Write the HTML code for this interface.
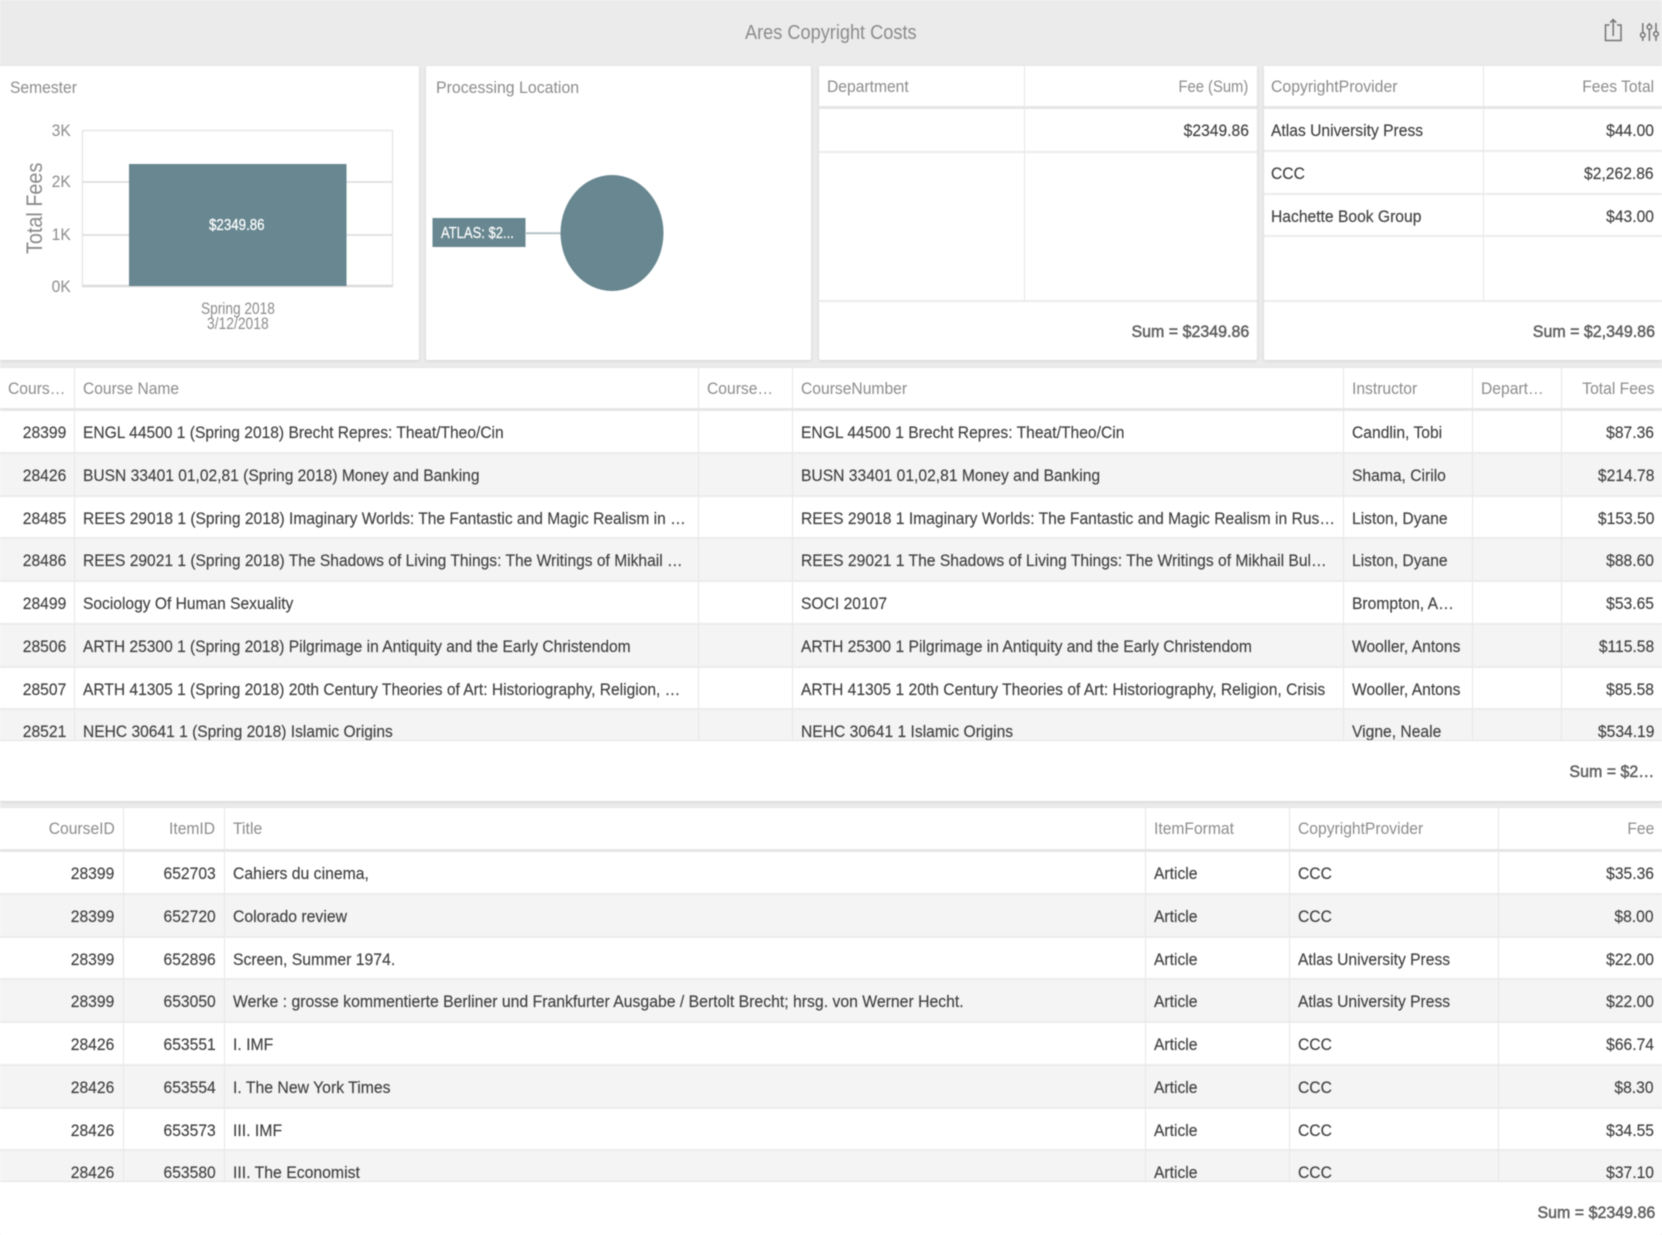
<!DOCTYPE html>
<html><head><meta charset="utf-8"><title>Ares Copyright Costs</title>
<style>
*{box-sizing:border-box}
html,body{margin:0;padding:0;width:1662px;height:1235px;overflow:hidden;background:#fff}
body{font-family:"Liberation Sans",sans-serif;font-size:17px;color:#404040;position:relative}
#w{position:absolute;left:0;top:0;width:1662px;height:1235px;background:#ebebeb;filter:blur(.5px);overflow:hidden}
.p{position:absolute;background:#fff;box-shadow:0 1px 3px rgba(0,0,0,.1);border-radius:2px}
.a{position:absolute;white-space:nowrap;line-height:20px;transform:scaleX(.92);transform-origin:left center}
.ar{position:absolute;white-space:nowrap;line-height:20px;transform:scaleX(.92);transform-origin:right center;text-align:right}
.h{color:#8c8c8c}
.s{color:#5f5f5f;-webkit-text-stroke:.5px #5f5f5f;transform:scaleX(.94)}
.t{position:absolute;overflow:hidden;display:block}
.row{display:grid;grid-template-columns:var(--c);height:42.75px;border-bottom:2px solid #ebebeb;-webkit-text-stroke:.15px #404040}
.row:nth-child(odd){background:#f4f4f4}
.row.hd{height:43px;background:#fff;border-bottom:3px solid #e6e6e6;color:#8c8c8c;-webkit-text-stroke:0}
.row>div{border-right:1px solid #e6e6e6;padding:0 8px;line-height:43px;overflow:hidden;white-space:nowrap}
.row.hd>div{line-height:42px}
.row>div:last-child{border-right:0}
.row span{display:inline-block;transform:scaleX(.92);transform-origin:left center}
.row>.r{text-align:right}
.row>.r span{transform-origin:right center}
.row.pl,.row.pl:nth-child(odd){background:#fff}
.c .row>div:nth-child(2) span{transform:scaleX(.916)}
.i .row>div:nth-child(3) span{transform:scaleX(.928)}
</style></head><body><div id="w">

<div class="a" style="left:745px;top:22.500px;font-size:20px;color:#8c8c8c;transform:scaleX(.908)">Ares Copyright Costs</div>
<svg style="position:absolute;left:1600px;top:16px" width="62" height="28" viewBox="1600 16 62 28" fill="none" stroke="#757575" stroke-width="1.5">
<path d="M1609.5 25H1605.5V40.5H1621V25H1617M1613.2 36V20M1610.2 22.6L1613.2 19.6L1616.2 22.6"/>
<path d="M1642.8 23V32.5M1642.8 37.5V41M1649.4 23V24.5M1649.4 29.5V41M1656 23V31.5M1656 36.5V41"/>
<circle cx="1642.8" cy="35" r="2.3"/><circle cx="1649.4" cy="27" r="2.3"/><circle cx="1656" cy="34" r="2.3"/>
</svg>

<!-- Semester -->
<div class="p" style="left:0;top:66px;width:419px;height:294px"></div>
<div class="a h" style="left:10px;top:78px">Semester</div>
<svg style="position:absolute;left:0;top:66px" width="419" height="294" viewBox="0 66 419 294">
<path d="M82 130.500H392.500V286M82.500 130V286" fill="none" stroke="#e3e3e3" stroke-width="1.200"/>
<path d="M82 182H393M82 235H393" stroke="#e3e3e3" stroke-width="2"/>
<path d="M82 286H393" stroke="#dcdcdc" stroke-width="2.500"/>
<rect x="129" y="164" width="217.500" height="122" fill="#688790"/>
</svg>
<div class="ar h" style="right:1591px;top:121px">3K</div>
<div class="ar h" style="right:1591px;top:172px">2K</div>
<div class="ar h" style="right:1591px;top:225px">1K</div>
<div class="ar h" style="right:1591px;top:277px">0K</div>
<div style="position:absolute;left:-15px;top:199px;width:100px;height:20px;line-height:20px;text-align:center;font-size:22px;color:#8a8a8a;white-space:nowrap;transform:rotate(-90deg) scaleX(.9)">Total Fees</div>
<div class="a" style="left:208.500px;top:216px;color:#fff;font-size:15.500px;-webkit-text-stroke:.25px #fff;transform:scaleX(.86)">$2349.86</div>
<div class="a h" style="left:201px;top:302px;font-size:16.500px;line-height:15px;transform:scaleX(.83)">Spring 2018</div>
<div class="a h" style="left:207px;top:317px;font-size:16.500px;line-height:15px;transform:scaleX(.84)">3/12/2018</div>

<!-- Processing Location -->
<div class="p" style="left:426px;top:66px;width:385px;height:294px"></div>
<div class="a h" style="left:436px;top:78px;transform:scaleX(.935)">Processing Location</div>
<svg style="position:absolute;left:426px;top:66px" width="385" height="294" viewBox="426 66 385 294">
<rect x="432.500" y="218" width="93" height="29" fill="#688790"/>
<path d="M525 233.300H561" stroke="#b5c4c8" stroke-width="2"/>
<ellipse cx="612" cy="233" rx="51.500" ry="58" fill="#688790"/>
</svg>
<div class="a" style="left:441px;top:224px;color:#fff;font-size:15.500px;transform:scaleX(.84);-webkit-text-stroke:.2px #fff">ATLAS: $2...</div>

<!-- Department -->
<div class="p" style="left:819px;top:66px;width:437.500px;height:294px"></div>
<div class="t" style="left:819px;top:66px;width:437.500px;height:235px;--c:206px 1fr">
<div class="row hd"><div><span>Department</span></div><div class="r"><span style="transform:scaleX(.87)">Fee (Sum)</span></div></div>
<div class="row pl" style="height:44px"><div></div><div class="r"><span>$2349.86</span></div></div>
<div class="row pl" style="height:148px;border-bottom:0"><div></div><div></div></div>
</div>
<div style="position:absolute;left:819px;top:300px;width:437.500px;height:2px;background:#ebebeb"></div>
<div class="ar s" style="right:413px;top:322px">Sum = $2349.86</div>

<!-- CopyrightProvider -->
<div class="p" style="left:1264px;top:66px;width:398px;height:294px"></div>
<div class="t" style="left:1264px;top:66px;width:398px;height:235px;--c:220px 1fr">
<div class="row hd"><div style="padding-left:7px"><span style="transform:scaleX(.93)">CopyrightProvider</span></div><div class="r"><span>Fees Total</span></div></div>
<div class="row pl" style="height:43px"><div style="padding-left:7px"><span>Atlas University Press</span></div><div class="r"><span>$44.00</span></div></div>
<div class="row pl" style="height:42.500px"><div style="padding-left:7px"><span>CCC</span></div><div class="r"><span>$2,262.86</span></div></div>
<div class="row pl" style="height:42.500px"><div style="padding-left:7px"><span>Hachette Book Group</span></div><div class="r"><span>$43.00</span></div></div>
<div class="row pl" style="height:63.500px;border-bottom:0"><div></div><div></div></div>
</div>
<div style="position:absolute;left:1264px;top:300px;width:398px;height:2px;background:#ebebeb"></div>
<div class="ar s" style="right:7px;top:322px">Sum = $2,349.86</div>

<!-- Course table -->
<div class="p" style="left:0;top:368px;width:1662px;height:433px"></div>
<div class="t c" style="left:0;top:368px;width:1662px;height:373px;border-bottom:1px solid #e3e3e3;--c:75px 623.500px 94px 551px 129px 89px 1fr">
<div class="row hd"><div><span>Cours…</span></div><div><span>Course Name</span></div><div><span>Course…</span></div><div><span>CourseNumber</span></div><div><span>Instructor</span></div><div><span>Depart…</span></div><div class="r"><span>Total Fees</span></div></div>
<div class="row"><div class="r"><span>28399</span></div><div><span>ENGL 44500 1 (Spring 2018) Brecht Repres: Theat/Theo/Cin</span></div><div></div><div><span>ENGL 44500 1 Brecht Repres: Theat/Theo/Cin</span></div><div><span>Candlin, Tobi</span></div><div></div><div class="r"><span>$87.36</span></div></div>
<div class="row"><div class="r"><span>28426</span></div><div><span>BUSN 33401 01,02,81 (Spring 2018) Money and Banking</span></div><div></div><div><span>BUSN 33401 01,02,81 Money and Banking</span></div><div><span>Shama, Cirilo</span></div><div></div><div class="r"><span>$214.78</span></div></div>
<div class="row"><div class="r"><span>28485</span></div><div><span>REES 29018 1 (Spring 2018) Imaginary Worlds: The Fantastic and Magic Realism in …</span></div><div></div><div><span>REES 29018 1 Imaginary Worlds: The Fantastic and Magic Realism in Rus…</span></div><div><span>Liston, Dyane</span></div><div></div><div class="r"><span>$153.50</span></div></div>
<div class="row"><div class="r"><span>28486</span></div><div><span>REES 29021 1 (Spring 2018) The Shadows of Living Things: The Writings of Mikhail …</span></div><div></div><div><span>REES 29021 1 The Shadows of Living Things: The Writings of Mikhail Bul…</span></div><div><span>Liston, Dyane</span></div><div></div><div class="r"><span>$88.60</span></div></div>
<div class="row"><div class="r"><span>28499</span></div><div><span>Sociology Of Human Sexuality</span></div><div></div><div><span>SOCI 20107</span></div><div><span>Brompton, A…</span></div><div></div><div class="r"><span>$53.65</span></div></div>
<div class="row"><div class="r"><span>28506</span></div><div><span>ARTH 25300 1 (Spring 2018) Pilgrimage in Antiquity and the Early Christendom</span></div><div></div><div><span>ARTH 25300 1 Pilgrimage in Antiquity and the Early Christendom</span></div><div><span>Wooller, Antons</span></div><div></div><div class="r"><span>$115.58</span></div></div>
<div class="row"><div class="r"><span>28507</span></div><div><span>ARTH 41305 1 (Spring 2018) 20th Century Theories of Art: Historiography, Religion, …</span></div><div></div><div><span>ARTH 41305 1 20th Century Theories of Art: Historiography, Religion, Crisis</span></div><div><span>Wooller, Antons</span></div><div></div><div class="r"><span>$85.58</span></div></div>
<div class="row"><div class="r"><span>28521</span></div><div><span>NEHC 30641 1 (Spring 2018) Islamic Origins</span></div><div></div><div><span>NEHC 30641 1 Islamic Origins</span></div><div><span>Vigne, Neale</span></div><div></div><div class="r"><span>$534.19</span></div></div>
</div>
<div class="ar s" style="right:8px;top:762px">Sum = $2…</div>

<!-- Item table -->
<div class="p" style="left:0;top:808px;width:1662px;height:427px"></div>
<div class="t i" style="left:0;top:808px;width:1662px;height:374px;border-bottom:1px solid #e3e3e3;--c:123.500px 101px 921px 144.500px 209px 1fr">
<div class="row hd" style="height:44px"><div class="r"><span>CourseID</span></div><div class="r"><span>ItemID</span></div><div><span>Title</span></div><div><span>ItemFormat</span></div><div><span>CopyrightProvider</span></div><div class="r"><span>Fee</span></div></div>
<div class="row"><div class="r"><span>28399</span></div><div class="r"><span>652703</span></div><div><span>Cahiers du cinema,</span></div><div><span>Article</span></div><div><span>CCC</span></div><div class="r"><span>$35.36</span></div></div>
<div class="row"><div class="r"><span>28399</span></div><div class="r"><span>652720</span></div><div><span>Colorado review</span></div><div><span>Article</span></div><div><span>CCC</span></div><div class="r"><span>$8.00</span></div></div>
<div class="row"><div class="r"><span>28399</span></div><div class="r"><span>652896</span></div><div><span>Screen, Summer 1974.</span></div><div><span>Article</span></div><div><span>Atlas University Press</span></div><div class="r"><span>$22.00</span></div></div>
<div class="row"><div class="r"><span>28399</span></div><div class="r"><span>653050</span></div><div><span>Werke : grosse kommentierte Berliner und Frankfurter Ausgabe / Bertolt Brecht; hrsg. von Werner Hecht.</span></div><div><span>Article</span></div><div><span>Atlas University Press</span></div><div class="r"><span>$22.00</span></div></div>
<div class="row"><div class="r"><span>28426</span></div><div class="r"><span>653551</span></div><div><span>I. IMF</span></div><div><span>Article</span></div><div><span>CCC</span></div><div class="r"><span>$66.74</span></div></div>
<div class="row"><div class="r"><span>28426</span></div><div class="r"><span>653554</span></div><div><span>I. The New York Times</span></div><div><span>Article</span></div><div><span>CCC</span></div><div class="r"><span>$8.30</span></div></div>
<div class="row"><div class="r"><span>28426</span></div><div class="r"><span>653573</span></div><div><span>III. IMF</span></div><div><span>Article</span></div><div><span>CCC</span></div><div class="r"><span>$34.55</span></div></div>
<div class="row"><div class="r"><span>28426</span></div><div class="r"><span>653580</span></div><div><span>III. The Economist</span></div><div><span>Article</span></div><div><span>CCC</span></div><div class="r"><span>$37.10</span></div></div>
</div>
<div class="ar s" style="right:7px;top:1203px">Sum = $2349.86</div>

</div></body></html>
